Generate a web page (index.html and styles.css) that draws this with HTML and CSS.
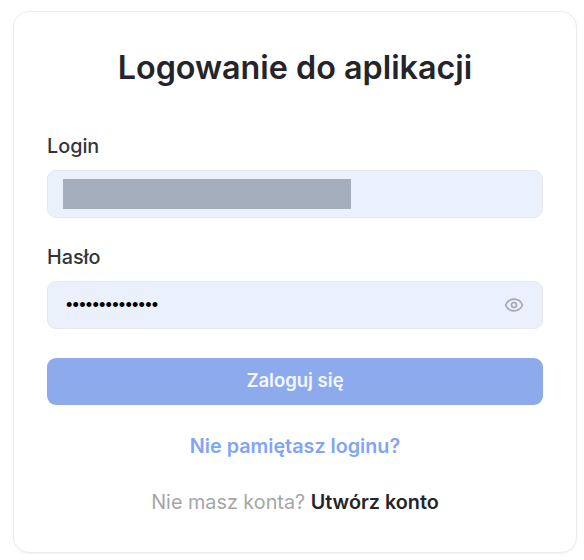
FILE: index.html
```html
<!DOCTYPE html>
<html lang="pl">
<head>
<meta charset="utf-8">
<title>Logowanie do aplikacji</title>
<link rel="stylesheet" href="styles.css">
</head>
<body>
<main class="card">
  <h1 class="title">Logowanie do aplikacji</h1>
  <div class="field field-login">
    <div class="label">Login</div>
    <div class="input"><span class="redacted"></span></div>
  </div>
  <div class="field field-pass">
    <div class="label">Hasło</div>
    <div class="input input-pass">
      <span class="dots">••••••••••••••</span>
      <svg class="eye" viewBox="0 0 24 24" width="20" height="20" fill="none" stroke="currentColor" stroke-width="2" stroke-linecap="round" stroke-linejoin="round"><path d="M2.06 12.35a1 1 0 0 1 0-.7 10.75 10.75 0 0 1 19.88 0 1 1 0 0 1 0 .7 10.75 10.75 0 0 1-19.88 0"/><circle cx="12" cy="12" r="3"/></svg>
    </div>
  </div>
  <div class="button">Zaloguj się</div>
  <div class="forgot">Nie pamiętasz loginu?</div>
  <div class="signup">Nie masz konta? <strong>Utwórz konto</strong></div>
</main>
</body>
</html>
```
FILE: styles.css
```css
* { box-sizing: border-box; }
html, body { margin: 0; height: 100%; background: #ffffff; }
body {
  padding: 11px 7px 0 13px;
  font-family: Inter, "Liberation Sans", sans-serif;
  color: #24242a;
}
.card {
  width: 564px;
  height: 542px;
  padding: 0 33px;
  background: #fff;
  border: 1.5px solid #ececef;
  border-radius: 16px;
  box-shadow: 0 1px 2px rgba(0, 0, 0, 0.05);
  display: flex;
  flex-direction: column;
}
.title {
  margin: 34px 0 0;
  font-size: 32.3px;
  line-height: 44px;
  font-weight: 600;
  text-align: center;
}
.field-login { margin-top: 44px; }
.field-pass { margin-top: 27px; }
.label {
  font-size: 19.8px;
  line-height: 24px;
  font-weight: 500;
  color: #33343a;
  margin-bottom: 12px;
}
.input {
  height: 48px;
  background: #eaf0fc;
  border: 1.5px solid #e6e8ee;
  border-radius: 9px;
  padding: 0 14.5px;
  display: flex;
  align-items: center;
}
.redacted {
  display: block;
  width: 288px;
  height: 30px;
  background: #a4aebc;
}
.input-pass { justify-content: space-between; padding: 0 17px 0 18px; }
.dots {
  font-family: "Liberation Sans", sans-serif;
  font-size: 18.3px;
  letter-spacing: 0.2px;
  color: #000;
}
.eye { color: #a3a8b3; margin-top: -1px; margin-right: 1px; }
.button {
  margin-top: 29px;
  height: 47px;
  padding-bottom: 3px;
  background: #8dabec;
  border-radius: 9px;
  color: #f4f7fe;
  font-size: 18.5px;
  font-weight: 600;
  display: flex;
  align-items: center;
  justify-content: center;
}
.forgot {
  margin-top: 28px;
  text-align: center;
  font-size: 19.75px;
  line-height: 26px;
  font-weight: 600;
  color: #82a4f7;
}
.signup {
  margin-top: 30px;
  text-align: center;
  font-size: 19.8px;
  line-height: 26px;
  color: #a5a5a8;
}
.signup strong { font-weight: 600; color: #24242a; }
```
